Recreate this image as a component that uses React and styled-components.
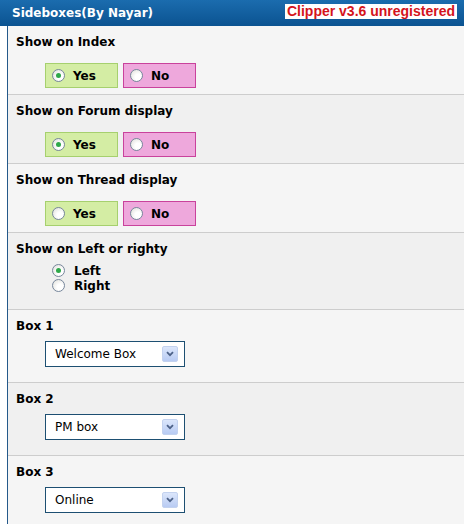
import React from 'react';
import styled, { createGlobalStyle } from 'styled-components';

const Global = createGlobalStyle`
  html, body { margin: 0; padding: 0; background: #ffffff; }
  body { font-family: "DejaVu Sans", Verdana, sans-serif; }
`;

const Header = styled.div`
  height: 26px;
  display: flex;
  align-items: center;
  justify-content: space-between;
  padding: 0 7px 0 12px;
  background: linear-gradient(to bottom, #1b6cae, #0b5391);
`;

const Title = styled.div`
  color: #ffffff;
  font-weight: bold;
  font-size: 12px;
  margin-top: -1px;
`;

const Unregistered = styled.div`
  background: #ffffff;
  color: #d4141c;
  font-family: "Liberation Sans", Arial, sans-serif;
  font-weight: bold;
  font-size: 14px;
  line-height: 15px;
  height: 15px;
  padding: 0 2px;
  margin-top: -3px;
`;

const Body = styled.div`
  margin-left: 7px;
  border-left: 1px solid #24598a;
`;

const Row = styled.div`
  background: ${({ alt }) => (alt ? '#f0f0f0' : '#f5f5f5')};
  border-top: ${({ first }) => (first ? 'none' : '1px solid #cdcdcd')};
  padding: 8px 0 ${({ pb }) => pb}px 8px;
`;

const Label = styled.div`
  font-weight: bold;
  font-size: 12px;
  line-height: 16px;
  color: #000000;
  margin-bottom: ${({ mb }) => mb}px;
`;

const Choices = styled.div`
  display: flex;
  gap: 5px;
  padding-left: 29px;
`;

const Choice = styled.label`
  width: 65px;
  height: 23px;
  display: flex;
  align-items: center;
  gap: 8px;
  padding-left: 6px;
  box-sizing: content-box;
  font-weight: bold;
  font-size: 12px;
  color: #000;
  background: ${({ tone }) => (tone === 'yes' ? '#d4eda4' : '#eea8dc')};
  border: 1px solid ${({ tone }) => (tone === 'yes' ? '#a6d06e' : '#c9429c')};
`;

const Radio = styled.span`
  width: 11px;
  height: 11px;
  border-radius: 50%;
  border: 1px solid #77879c;
  background: radial-gradient(circle at 65% 65%, #ffffff 30%, #dcdcd6 100%);
  display: inline-flex;
  align-items: center;
  justify-content: center;
  flex: none;
  &::after {
    content: '';
    display: ${({ checked }) => (checked ? 'block' : 'none')};
    width: 5px;
    height: 5px;
    border-radius: 50%;
    background: #2ea84a;
  }
`;

const Stack = styled.div`
  display: flex;
  flex-direction: column;
  padding-left: 36px;
`;

const StackItem = styled.label`
  display: flex;
  align-items: center;
  gap: 9px;
  height: 15px;
  font-weight: bold;
  font-size: 12px;
  color: #000;
`;

const Select = styled.div`
  margin-left: 29px;
  width: 123px;
  height: 24px;
  border: 1px solid #1d4f72;
  background: #ffffff;
  display: flex;
  align-items: center;
  justify-content: space-between;
  padding: 0 6px 0 9px;
  box-sizing: content-box;
  font-size: 12px;
  color: #000;
`;

const Arrow = styled.span`
  width: 16px;
  height: 16px;
  border-radius: 2px;
  background: linear-gradient(to bottom, #dbe6fb, #b8cbf3);
  border: 1px solid #c3d2ef;
  box-sizing: border-box;
  display: flex;
  align-items: center;
  justify-content: center;
`;

const Chevron = () => (
  <svg width="8" height="6" viewBox="0 0 8 6">
    <path d="M1 1.2 L4 4.2 L7 1.2" fill="none" stroke="#4d6288" strokeWidth="1.8" />
  </svg>
);

// value: 'yes', 'no' or undefined (nothing picked yet)
const YesNo = ({ label, value, alt, first }) => (
  <Row alt={alt} first={first} pb={6}>
    <Label mb={13}>{label}</Label>
    <Choices>
      <Choice tone="yes"><Radio checked={value === 'yes'} />Yes</Choice>
      <Choice tone="no"><Radio checked={value === 'no'} />No</Choice>
    </Choices>
  </Row>
);

const BoxRow = ({ label, value, alt }) => (
  <Row alt={alt} pb={15}>
    <Label mb={7}>{label}</Label>
    <Select>
      {value}
      <Arrow><Chevron /></Arrow>
    </Select>
  </Row>
);

export default function App() {
  return (
    <>
      <Global />
      <Header>
        <Title>Sideboxes(By Nayar)</Title>
        <Unregistered>Clipper v3.6 unregistered</Unregistered>
      </Header>
      <Body>
        <YesNo first label="Show on Index" value="yes" />
        <YesNo alt label="Show on Forum display" value="yes" />
        <YesNo label="Show on Thread display" />
        <Row alt pb={16}>
          <Label mb={6}>Show on Left or righty</Label>
          <Stack>
            <StackItem><Radio checked />Left</StackItem>
            <StackItem><Radio />Right</StackItem>
          </Stack>
        </Row>
        <BoxRow label="Box 1" value="Welcome Box" />
        <BoxRow alt label="Box 2" value="PM box" />
        <BoxRow label="Box 3" value="Online" />
      </Body>
    </>
  );
}
